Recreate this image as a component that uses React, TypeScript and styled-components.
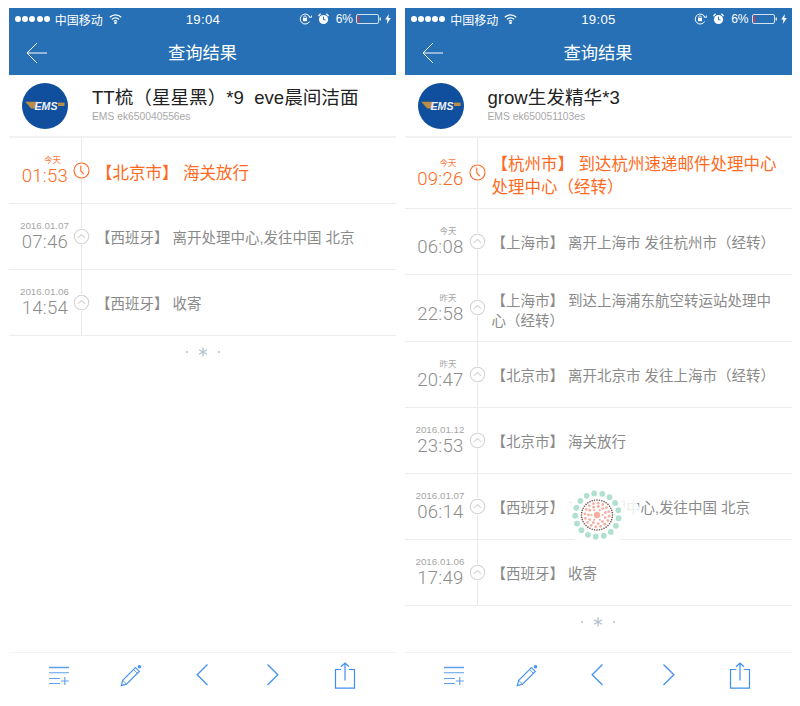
import React from "react";
import styled, { createGlobalStyle } from "styled-components";

const Global = createGlobalStyle`
  html, body { margin: 0; padding: 0; background: #fff; }
  body { font-family: "Liberation Sans", "Noto Sans CJK SC", sans-serif; }
`;

const Page = styled.div`
  display: flex;
  gap: 8.5px;
  width: 800px;
  height: 706px;
  padding: 8px 0 0 9px;
  box-sizing: border-box;
  overflow: hidden;
`;

const Phone = styled.section`
  position: relative;
  display: flex;
  flex-direction: column;
  width: 387px;
  height: 698px;
`;

const BlueTop = styled.header`
  background: #2770b5;
  color: #fff;
  height: 67px;
  display: flex;
  flex-direction: column;
  flex: none;
`;

const StatusBar = styled.div`
  display: grid;
  grid-template-columns: 1fr auto 1fr;
  align-items: center;
  height: 22px;
  padding: 0 5px 0 6px;
  font-size: 12px;
  box-sizing: border-box;
`;

const StatusLeft = styled.div`
  display: flex;
  align-items: center;
`;

const StatusRight = styled.div`
  display: flex;
  align-items: center;
  justify-content: flex-end;
`;

const Dots = styled.div`
  display: flex;
  gap: 1.2px;
  margin-right: 5px;
`;

const Dot = styled.i`
  width: 6px;
  height: 6px;
  border-radius: 50%;
  background: #fff;
`;

const WifiGap = styled.span`
  width: 6px;
`;

const Clock = styled.span`
  font-size: 13.2px;
  letter-spacing: 0.3px;
`;

const Percent = styled.span`
  margin: 0 3px 0 7px;
  font-size: 12px;
`;

const NavBar = styled.div`
  position: relative;
  flex: 1;
  display: flex;
  align-items: center;
  justify-content: center;
  font-size: 17.3px;
  padding-bottom: 2px;
`;

const BackIcon = styled.svg`
  position: absolute;
  left: 17px;
  top: 12px;
`;

const Summary = styled.div`
  display: flex;
  align-items: center;
  height: 61px;
  padding-left: 13px;
  gap: 24px;
  border-bottom: 2px solid #f1f1f1;
  flex: none;
`;

const SummaryText = styled.div`
  display: flex;
  flex-direction: column;
  margin-top: -1px;
`;

const Title = styled.div`
  font-size: 18.6px;
  line-height: 22px;
  color: #222;
  white-space: pre;
`;

const Tracking = styled.div`
  font-size: 10.3px;
  line-height: 13px;
  margin-top: 1px;
  color: #a8a8a8;
`;

const Row = styled.div<{ $h: number }>`
  position: relative;
  display: flex;
  height: ${(p) => p.$h}px;
  box-sizing: border-box;
  border-bottom: 1px solid #ececec;
  flex: none;
`;

const TimeCol = styled.div<{ $active?: boolean }>`
  width: 72px;
  padding-right: 13px;
  box-sizing: border-box;
  flex: none;
  display: flex;
  flex-direction: column;
  align-items: flex-end;
  justify-content: center;
  color: ${(p) => (p.$active ? "#ff6a22" : "#8d8d8d")};
`;

const DayLabel = styled.div<{ $active?: boolean; $date: boolean }>`
  font-size: ${(p) => (p.$date ? "9.8px" : "8.5px")};
  line-height: 12px;
  color: ${(p) => (p.$active ? "#ff7a3c" : "#a6a6a6")};
  padding-right: ${(p) => (p.$date ? "0" : "7px")};
  margin-right: ${(p) => (p.$date ? "-1px" : "0")};
`;

const TimeText = styled.div`
  font-family: Roboto, "Liberation Sans", sans-serif;
  font-weight: 300;
  font-size: 18.6px;
  line-height: 21px;
  letter-spacing: 0.2px;
`;

const Body = styled.div<{ $active?: boolean; $low?: boolean }>`
  flex: 1;
  border-left: 1px solid #e8e8e8;
  padding: ${(p) => (p.$active || p.$low ? "5px" : "2px")} 14px 0 14px;
  display: flex;
  align-items: center;
  font-size: ${(p) => (p.$active ? "16.5px" : "14.5px")};
  line-height: ${(p) => (p.$active ? "23px" : "20px")};
  color: ${(p) => (p.$active ? "#ff6a22" : "#8a8a8a")};
`;

const Marker = styled.div`
  position: absolute;
  left: 64px;
  top: 50%;
  width: 17px;
  height: 17px;
  margin-top: -9px;
  background: #fff;
  border-radius: 50%;
  display: flex;
`;

const EndMark = styled.div`
  display: flex;
  justify-content: center;
  align-items: center;
  gap: 10px;
  height: 32px;
  flex: none;
`;

const Pip = styled.i`
  width: 2px;
  height: 2px;
  border-radius: 50%;
  background: #b7c2cf;
`;

const Spacer = styled.div`
  flex: 1;
`;

const Toolbar = styled.nav`
  height: 54px;
  flex: none;
  border-top: 1px solid #f3f3f3;
  box-sizing: border-box;
  display: grid;
  grid-template-columns: repeat(5, 71.5px);
  padding: 0 0 0 14px;
  align-items: start;
`;

const ToolSlot = styled.div`
  display: flex;
  justify-content: center;
  padding-top: 9px;
  height: 27px;
`;

const Stamp = styled.svg`
  position: absolute;
  left: 147.5px;
  top: 467px;
`;

type Ev = { day: string; time: string; text: string; h: number; active?: boolean; low?: boolean };

const left: Ev[] = [
  { day: "今天", time: "01:53", text: "【北京市】 海关放行", h: 66, active: true },
  { day: "2016.01.07", time: "07:46", text: "【西班牙】 离开处理中心,发往中国 北京", h: 66 },
  { day: "2016.01.06", time: "14:54", text: "【西班牙】 收寄", h: 66 },
];

const right: Ev[] = [
  { day: "今天", time: "09:26", text: "【杭州市】 到达杭州速递邮件处理中心处理中心（经转）", h: 71, active: true },
  { day: "今天", time: "06:08", text: "【上海市】 离开上海市 发往杭州市（经转）", h: 66 },
  { day: "昨天", time: "22:58", text: "【上海市】 到达上海浦东航空转运站处理中心（经转）", h: 67, low: true },
  { day: "昨天", time: "20:47", text: "【北京市】 离开北京市 发往上海市（经转）", h: 66 },
  { day: "2016.01.12", time: "23:53", text: "【北京市】 海关放行", h: 66 },
  { day: "2016.01.07", time: "06:14", text: "【西班牙】 离开处理中心,发往中国 北京", h: 66 },
  { day: "2016.01.06", time: "17:49", text: "【西班牙】 收寄", h: 66 },
];

const ClockIcon = () => (
  <svg width="17" height="17" viewBox="0 0 17 17" fill="none" stroke="#ff6a22" strokeWidth="1.1">
    <circle cx="8.5" cy="8.5" r="7.5" />
    <path d="M7.8 3.6V9l3 3.2" />
  </svg>
);

const UpIcon = () => (
  <svg width="17" height="17" viewBox="0 0 17 17" fill="none" stroke="#d4d4d4" strokeWidth="1.1">
    <circle cx="8.5" cy="8.5" r="7.2" />
    <path d="M4.8 9.8l3.7-3.2 3.7 3.2" />
  </svg>
);

const WifiIcon = () => (
  <svg width="13" height="10" viewBox="0 0 13 10" fill="none" stroke="#fff" strokeWidth="1.3">
    <path d="M.8 3.3a8 8 0 0 1 11.4 0M2.9 5.4a5 5 0 0 1 7.2 0M4.9 7.4a2.2 2.2 0 0 1 3.2 0" />
    <circle cx="6.5" cy="8.9" r=".6" fill="#fff" />
  </svg>
);

const LockIcon = () => (
  <svg width="13" height="12" viewBox="0 0 13 12" fill="none" stroke="#fff" strokeWidth="1">
    <path d="M10.6 8.5A5 5 0 1 1 11 4.5" />
    <path d="M9.6 3.8l2.8.6.4-2" strokeWidth=".9" />
    <rect x="4" y="5" width="4" height="3.2" fill="#fff" stroke="none" />
    <path d="M4.8 5V4a1.2 1.2 0 0 1 2.4 0v1" strokeWidth=".8" />
  </svg>
);

const AlarmIcon = () => (
  <svg width="11" height="12" viewBox="0 0 11 12" style={{ marginLeft: 6 }}>
    <circle cx="5.5" cy="6.5" r="4.6" fill="#fff" />
    <path d="M5.5 3.6v3.2h2" stroke="#2770b5" strokeWidth="1" fill="none" />
    <path d="M.4 3L2.6.8M10.6 3L8.4.8" stroke="#fff" strokeWidth="1.3" />
  </svg>
);

const BatteryIcon = () => (
  <svg width="26" height="10" viewBox="0 0 26 10">
    <rect x=".5" y=".5" width="22" height="9" rx="1.5" fill="none" stroke="#fff" strokeWidth=".8" />
    <rect x="1.5" y="1.5" width="1.6" height="7" fill="#d8384a" />
    <rect x="23.6" y="3.5" width="1.2" height="3" fill="#fff" />
  </svg>
);

const BoltIcon = () => (
  <svg width="6" height="10" viewBox="0 0 6 10" style={{ marginLeft: 3 }}>
    <path d="M3.8 0L.2 5.6h2.2L1.8 10l4-6H3.4z" fill="#fff" />
  </svg>
);

const EmsLogo = () => (
  <svg width="46" height="46" viewBox="0 0 46 46">
    <circle cx="23" cy="23" r="23" fill="#0f4f9e" />
    <path d="M3.2 18.8H15l-1.4 6.8H9.2z" fill="#b98c48" />
    <path d="M36 19.6h6.6v3.4H36z" fill="#b98c48" />
    <text x="24" y="27" textAnchor="middle" fontSize="10.6" fontWeight="700" fontStyle="italic" fill="#eef2f6" fontFamily="Liberation Sans, sans-serif">
      EMS
    </text>
  </svg>
);

const ListIcon = () => (
  <svg width="22" height="26" viewBox="0 0 22 26" fill="none" stroke="#5f9fee">
    <path d="M1 5.5h20" strokeWidth="1.5" />
    <path d="M1 10.7h20M1 16.5h11M1 21.5h11M12.8 19h8M16.8 15v8" strokeWidth="1.1" />
  </svg>
);

const PencilIcon = () => (
  <svg width="22" height="26" viewBox="0 0 22 26" fill="none" stroke="#4a94ee" strokeWidth="1.2" style={{ marginLeft: 2 }}>
    <path d="M1.3 23.6l1.4-5.2L15.5 5.6l3.8 3.8L6.5 22.2z" />
    <path d="M2.7 18.4l3.8 3.8M13.6 7.5l3.8 3.8" strokeWidth=".9" />
    <circle cx="19.5" cy="4.8" r="1.8" fill="#4a94ee" stroke="none" />
  </svg>
);

const ChevLeft = () => (
  <svg width="12" height="26" viewBox="0 0 12 26" fill="none" stroke="#4a94ee" strokeWidth="1.4">
    <path d="M11.5 2.5L1.2 12.8l10.3 10.2" />
  </svg>
);

const ChevRight = () => (
  <svg width="12" height="26" viewBox="0 0 12 26" fill="none" stroke="#4a94ee" strokeWidth="1.4">
    <path d="M.5 2.5l10.3 10.3L.5 23" />
  </svg>
);

const ShareIcon = () => (
  <svg width="22" height="27" viewBox="0 0 22 27" fill="none" stroke="#3f8ff0" strokeWidth="1.2">
    <path d="M7.2 7.5H1.5v18.6h19V7.5h-5.7" />
    <path d="M11 18.5V1.2M7 4.8l4-3.8 4 3.8" />
  </svg>
);

const StarIcon = () => (
  <svg width="10" height="10" viewBox="0 0 10 10" stroke="#b3c0ce" strokeWidth="1.3">
    <path d="M5 .5v9M1 2.7l8 4.6M1 7.3l8-4.6" />
  </svg>
);

const ring = (n: number, rx: number, ry: number, offset = 0) =>
  Array.from({ length: n }, (_, i) => {
    const a = (i / n) * Math.PI * 2 + offset;
    return { x: 40 + Math.cos(a) * rx, y: 40 + Math.sin(a) * ry };
  });

const Watermark = () => (
  <Stamp width="90" height="80" viewBox="-5 0 90 80">
    <ellipse cx="40" cy="40" rx="44" ry="29" fill="#fff" opacity="0.85" />
    <circle cx="40" cy="40" r="28" fill="#fff" />
    {ring(17, 21.8, 21.8, 0.15).map((d, i) => (
      <circle key={`m${i}`} cx={d.x} cy={d.y} r="2.9" fill="#b0e0cf" />
    ))}
    {ring(40, 15.5, 15, 0).map((d, i) => (
      <circle key={`d${i}`} cx={d.x} cy={d.y} r=".8" fill="#72504a" />
    ))}
    {ring(16, 12.2, 11.8, 0.1).map((d, i) => (
      <circle key={`a${i}`} cx={d.x} cy={d.y} r="1.4" fill="#f6aea2" />
    ))}
    {ring(11, 8.6, 8.6, 0.3).map((d, i) => (
      <circle key={`b${i}`} cx={d.x} cy={d.y} r="1.4" fill="#f6aea2" />
    ))}
    {ring(6, 5.6, 5.6, 0).map((d, i) => (
      <circle key={`c${i}`} cx={d.x} cy={d.y} r="1.1" fill="#f6aea2" />
    ))}
    <circle cx="40" cy="40" r="3.2" fill="#f6aea2" />
  </Stamp>
);

const Screen = ({
  clock,
  title,
  code,
  events,
  stamp,
}: {
  clock: string;
  title: string;
  code: string;
  events: Ev[];
  stamp?: boolean;
}) => (
  <Phone>
    <BlueTop>
      <StatusBar>
        <StatusLeft>
          <Dots>
            {[0, 1, 2, 3, 4].map((i) => (
              <Dot key={i} />
            ))}
          </Dots>
          <span>中国移动</span>
          <WifiGap />
          <WifiIcon />
        </StatusLeft>
        <Clock>{clock}</Clock>
        <StatusRight>
          <LockIcon />
          <AlarmIcon />
          <Percent>6%</Percent>
          <BatteryIcon />
          <BoltIcon />
        </StatusRight>
      </StatusBar>
      <NavBar>
        <BackIcon width="22" height="22" viewBox="0 0 22 22" fill="none" stroke="#fff" strokeWidth="1">
          <path d="M21 11H1.2M11 1L1 11l10 10" />
        </BackIcon>
        查询结果
      </NavBar>
    </BlueTop>
    <Summary>
      <EmsLogo />
      <SummaryText>
        <Title>{title}</Title>
        <Tracking>{code}</Tracking>
      </SummaryText>
    </Summary>
    {events.map((e) => (
      <Row key={e.time} $h={e.h}>
        <TimeCol $active={e.active}>
          <DayLabel $active={e.active} $date={e.day.length > 4}>
            {e.day}
          </DayLabel>
          <TimeText>{e.time}</TimeText>
        </TimeCol>
        <Body $active={e.active} $low={e.low}>
          <span>{e.text}</span>
        </Body>
        <Marker>{e.active ? <ClockIcon /> : <UpIcon />}</Marker>
      </Row>
    ))}
    <EndMark>
      <Pip />
      <StarIcon />
      <Pip />
    </EndMark>
    <Spacer />
    <Toolbar>
      <ToolSlot>
        <ListIcon />
      </ToolSlot>
      <ToolSlot>
        <PencilIcon />
      </ToolSlot>
      <ToolSlot>
        <ChevLeft />
      </ToolSlot>
      <ToolSlot>
        <ChevRight />
      </ToolSlot>
      <ToolSlot>
        <ShareIcon />
      </ToolSlot>
    </Toolbar>
    {stamp && <Watermark />}
  </Phone>
);

export default function App() {
  return (
    <Page>
      <Global />
      <Screen clock="19:04" title="TT梳（星星黑）*9  eve晨间洁面" code="EMS ek650040556es" events={left} />
      <Screen clock="19:05" title="grow生发精华*3" code="EMS ek650051103es" events={right} stamp />
    </Page>
  );
}
